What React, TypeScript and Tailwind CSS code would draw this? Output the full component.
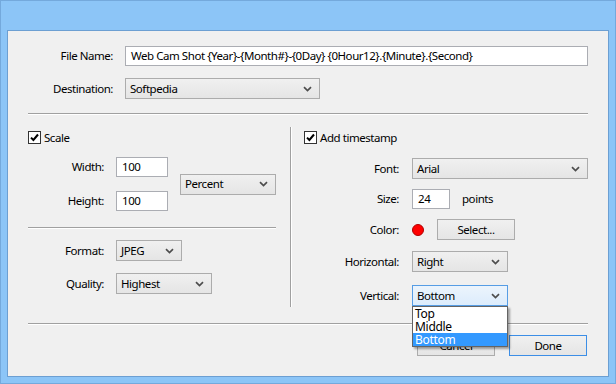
import React from "react";

function Chevron() {
  return (
    <svg width="9" height="6" viewBox="0 0 9 6" className="shrink-0">
      <path d="M1 1.2 L4.5 4.6 L8 1.2" fill="none" stroke="#4d4d4d" strokeWidth="1.7" />
    </svg>
  );
}

function Select({ className, value, focused }: { className: string; value: string; focused?: boolean }) {
  return (
    <div
      className={`flex h-[21px] items-center justify-between border pl-[4px] pr-[7px] ${
        focused
          ? "border-[#569de5] bg-linear-to-b from-[#ecf4fc] to-[#dcecfc]"
          : "border-[#acacac] bg-linear-to-b from-[#f0f0f0] to-[#e5e5e5]"
      } ${className}`}
    >
      <span className="leading-none">{value}</span>
      <Chevron />
    </div>
  );
}

function Input({ className, value }: { className: string; value: string }) {
  return (
    <div className={`flex h-[20px] items-center border border-[#abadb3] bg-white pl-[5px] ${className}`}>
      <span className="leading-none whitespace-nowrap">{value}</span>
    </div>
  );
}

function Checkbox({ label }: { label: string }) {
  return (
    <div className="flex h-[13px] items-center">
      <div className="flex h-[13px] w-[13px] items-center justify-center border border-[#333333] bg-white">
        <svg width="9" height="9" viewBox="0 0 9 9">
          <path d="M1 4.6 L3.4 7 L8 1.5" fill="none" stroke="#000" strokeWidth="2" />
        </svg>
      </div>
      <span className="ml-[3px] leading-none">{label}</span>
    </div>
  );
}

function Button({ label, primary }: { label: string; primary?: boolean }) {
  return (
    <div
      className={`flex h-[21px] w-[78px] items-center justify-center border bg-linear-to-b from-[#f0f0f0] to-[#e5e5e5] ${
        primary ? "border-[#3c8ee6]" : "border-[#acacac]"
      }`}
    >
      <span className="leading-none">{label}</span>
    </div>
  );
}

function HSep({ className }: { className: string }) {
  return <div className={`h-[2px] border-t border-b border-t-[#a0a0a0] border-b-white ${className}`} />;
}

export default function App() {
  return (
    <div className="h-[384px] w-[616px] overflow-hidden border border-[#74a9dc] bg-[#8cc5f7] pt-[29px] pr-[6px] pb-[6px] pl-[6px] font-['Noto_Sans',sans-serif] text-[11.5px] tracking-[-0.45px] text-black">
      <div className="relative h-[347px] w-[602px] border border-[#6c9fd2] bg-[#f0f0f0] px-[20px] pt-[15px]">
        {/* File name */}
        <div className="flex h-[20px] items-center">
          <div className="w-[85px] text-right leading-none">File Name:</div>
          <Input className="ml-[12px] flex-1" value="Web Cam Shot {Year}-{Month#}-{0Day} {0Hour12}.{Minute}.{Second}" />
        </div>
        {/* Destination */}
        <div className="mt-[12px] flex h-[21px] items-center">
          <div className="w-[85px] text-right leading-none">Destination:</div>
          <Select className="ml-[12px] w-[195px]" value="Softpedia" />
        </div>

        <HSep className="mt-[14px]" />

        <div className="flex h-[208px]">
          {/* Left panel */}
          <div className="w-[262px]">
            <div className="mt-[16px]">
              <Checkbox label="Scale" />
            </div>
            <div className="mt-[13px] flex items-center">
              <div>
                <div className="flex h-[20px] items-center">
                  <div className="w-[76px] text-right leading-none">Width:</div>
                  <Input className="ml-[12px] w-[52px]" value="100" />
                </div>
                <div className="mt-[14px] flex h-[20px] items-center">
                  <div className="w-[76px] text-right leading-none">Height:</div>
                  <Input className="ml-[12px] w-[52px]" value="100" />
                </div>
              </div>
              <Select className="ml-[12px] w-[96px]" value="Percent" />
            </div>
            <HSep className="mt-[16px] w-[248px]" />
            <div className="mt-[11px] flex h-[21px] items-center">
              <div className="w-[76px] text-right leading-none">Format:</div>
              <Select className="ml-[12px] w-[66px]" value="JPEG" />
            </div>
            <div className="mt-[12px] flex h-[21px] items-center">
              <div className="w-[76px] text-right leading-none">Quality:</div>
              <Select className="ml-[12px] w-[96px]" value="Highest" />
            </div>
          </div>

          {/* Vertical divider */}
          <div className="mt-[12px] h-[180px] w-[2px] border-l border-r border-l-[#a0a0a0] border-r-white" />

          {/* Right panel */}
          <div className="flex-1 pl-[12px]">
            <div className="mt-[16px]">
              <Checkbox label="Add timestamp" />
            </div>
            <div className="mt-[14px] flex h-[21px] items-center">
              <div className="w-[95px] text-right leading-none">Font:</div>
              <Select className="ml-[13px] w-[176px]" value="Arial" />
            </div>
            <div className="mt-[10px] flex h-[20px] items-center">
              <div className="w-[95px] text-right leading-none">Size:</div>
              <Input className="ml-[13px] w-[38px]" value="24" />
              <span className="ml-[12px] leading-none">points</span>
            </div>
            <div className="mt-[10px] flex h-[21px] items-center">
              <div className="w-[95px] text-right leading-none">Color:</div>
              <div className="ml-[13px] h-[12px] w-[12px] rounded-full border border-[#b00000] bg-[#ff0000]" />
              <div className="ml-[13px]">
                <Button label="Select..." />
              </div>
            </div>
            <div className="mt-[11px] flex h-[21px] items-center">
              <div className="w-[95px] text-right leading-none">Horizontal:</div>
              <Select className="ml-[13px] w-[96px]" value="Right" />
            </div>
            <div className="mt-[13px] flex h-[21px] items-center">
              <div className="w-[95px] text-right leading-none">Vertical:</div>
              <Select className="ml-[13px] w-[96px]" value="Bottom" focused />
            </div>
          </div>
        </div>

        <HSep className="" />

        <div className="mt-[10px] flex justify-end gap-[14px] pr-[1px]">
          <Button label="Cancel" />
          <Button label="Done" primary />
        </div>

        {/* Dropdown list */}
        <div className="absolute left-[404px] top-[275px] w-[96px] border border-[#646464] bg-white text-[12px] tracking-[-0.3px] shadow-[2px_2px_2px_rgba(0,0,0,0.35)]">
          <div className="flex h-[13px] items-center pl-[2px] leading-none">Top</div>
          <div className="flex h-[13px] items-center pl-[2px] leading-none">Middle</div>
          <div className="flex h-[13px] items-center bg-[#3399ff] pl-[2px] leading-none text-white">Bottom</div>
        </div>
      </div>
    </div>
  );
}
